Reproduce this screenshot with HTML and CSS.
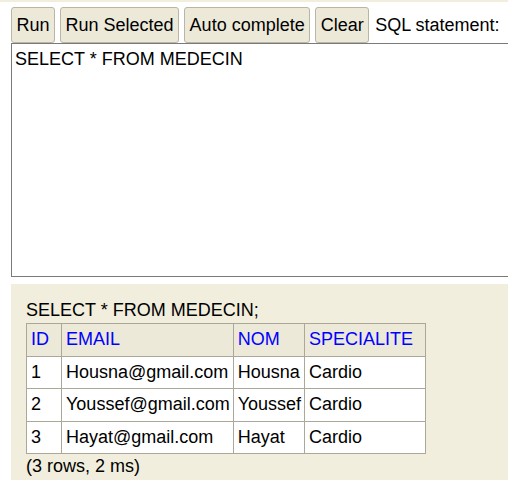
FILE: index.html
```html
<!DOCTYPE html>
<html>
<head>
<meta charset="utf-8">
<link rel="stylesheet" href="styles.css">
</head>
<body>
<div class="topline"></div>
<div class="page">
  <div class="toolbar">
    <button class="btn">Run</button>
    <button class="btn">Run Selected</button>
    <button class="btn">Auto complete</button>
    <button class="btn">Clear</button>
    <span class="label">SQL statement:</span>
  </div>
  <div class="editor">SELECT * FROM MEDECIN</div>
  <div class="result">
    <div class="query">SELECT * FROM MEDECIN;</div>
    <table class="grid">
      <tr><th>ID</th><th>EMAIL</th><th>NOM</th><th>SPECIALITE</th></tr>
      <tr><td>1</td><td>Housna@gmail.com</td><td>Housna</td><td>Cardio</td></tr>
      <tr><td>2</td><td>Youssef@gmail.com</td><td>Youssef</td><td>Cardio</td></tr>
      <tr><td>3</td><td>Hayat@gmail.com</td><td>Hayat</td><td>Cardio</td></tr>
    </table>
    <div class="status">(3 rows, 2 ms)</div>
  </div>
</div>
</body>
</html>
```

FILE: styles.css
```css
html, body {
  margin: 0;
  padding: 0;
  background: #ffffff;
  font-family: "Liberation Sans", Arial, sans-serif;
  font-size: 18px;
  color: #000000;
  overflow: hidden;
  height: 100%;
}
body {
  display: flex;
  flex-direction: column;
}
.topline {
  height: 2px;
  flex: none;
  background: #f1eedd;
}
.page {
  flex: 1;
  min-height: 0;
  display: flex;
  flex-direction: column;
  padding: 5px 0 0 11px;
}
.toolbar {
  display: flex;
  align-items: center;
  gap: 5px;
  height: 36px;
  flex: none;
}
.btn {
  font-family: "Liberation Sans", Arial, sans-serif;
  font-size: 18px;
  color: #000;
  background: #ece9d8;
  border: 1px solid #b9b6a6;
  border-radius: 3px;
  height: 36px;
  padding: 0 4.5px;
  margin: 0;
}
.label {
  margin-left: 1px;
}
.editor {
  flex: none;
  border: 1px solid #7a7a7a;
  border-right: none;
  padding: 5px 3px;
  box-sizing: border-box;
  height: 234px;
  white-space: pre;
  line-height: 21px;
}
.result {
  flex: 1;
  min-height: 0;
  margin-top: 7px;
  background: #f1eedd;
  padding: 14px 15px 0 15px;
}
.query {
  line-height: 24px;
}
.grid {
  border-collapse: collapse;
  margin-top: 1px;
}
.grid th, .grid td {
  border: 1px solid #aca899;
  padding: 5px 3px 5.5px 4px;
  text-align: left;
  font-weight: normal;
  line-height: 21px;
  white-space: nowrap;
}
.grid th {
  background: #ece9d8;
  color: #0000ff;
  padding-right: 12px;
}
.grid td {
  background: #ffffff;
}
.status {
  line-height: 24px;
}
```
